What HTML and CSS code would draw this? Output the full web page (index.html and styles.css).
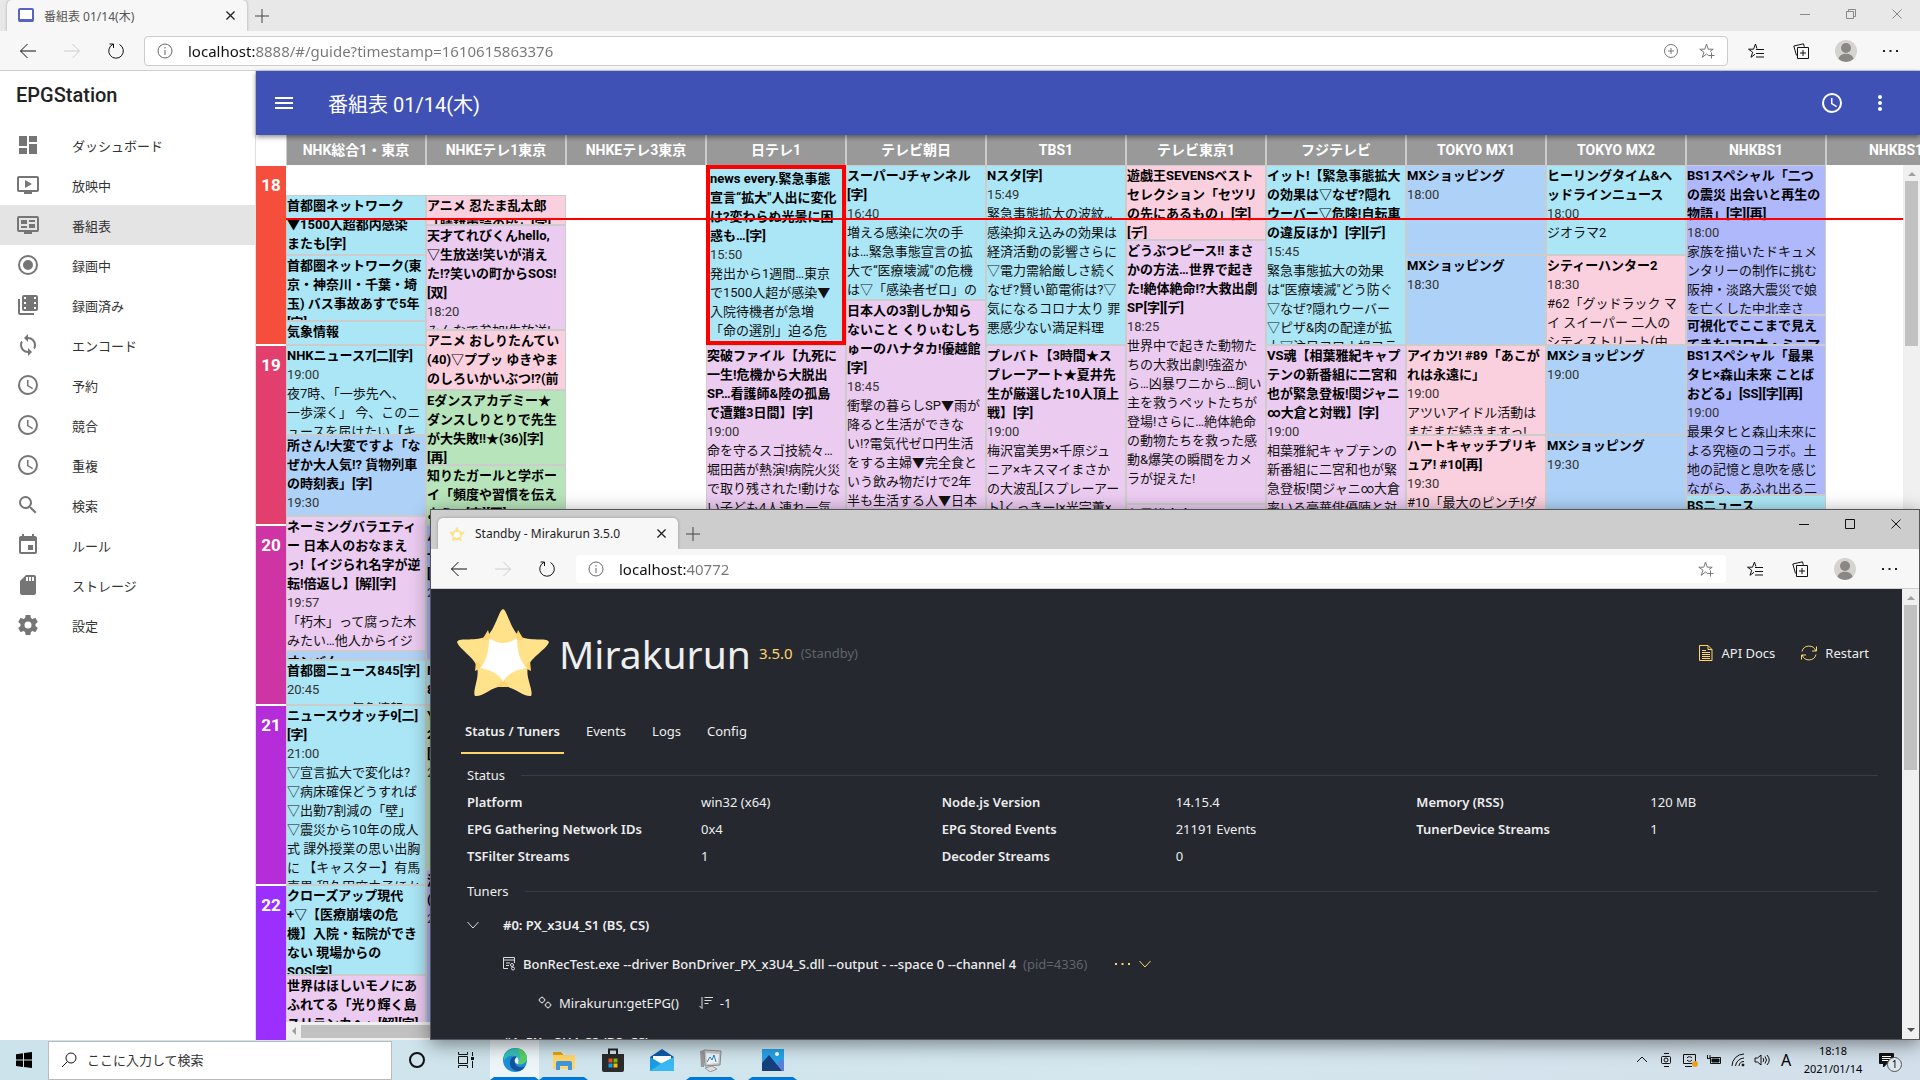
FILE: index.html
```html
<!DOCTYPE html>
<html lang="ja">
<head>
    <meta charset="UTF-8">
    <meta name="viewport" content="width=device-width, initial-scale=1.0">
    <title>番組表 01/14(木)</title>
    <link rel="stylesheet" href="styles.css">
</head>
<body>
    <!-- shared icons -->
    <svg class="sprite" aria-hidden="true">
        <symbol id="i-back" viewBox="0 0 16 16"><path d="M0.5 8H16M7.5 1L0.5 8l7 7" /></symbol>
        <symbol id="i-forward" viewBox="0 0 16 16"><path d="M0 8h15.5M8.500 1l7 7-7 7" /></symbol>
        <symbol id="i-reload" viewBox="0 0 16 16"><path d="M11.500 1.500a7.300 7.300 0 1 1-6.500-.2M1.500 1h4v4" /></symbol>
        <symbol id="i-info" viewBox="0 0 16 16"><circle cx="8" cy="8" r="7" /><path d="M8 7v5M8 4v1.500" /></symbol>
        <symbol id="i-close" viewBox="0 0 10 10"><path d="M0.500 0.500l9 9M9.500 0.500l-9 9" /></symbol>
        <symbol id="i-plus" viewBox="0 0 14 14"><path d="M7 0v14M0 7h14" /></symbol>
        <symbol id="i-star" viewBox="0 0 16 16"><path d="M9.500 12.500L7.500 11 3.300 14.300 5 9.200.8 6.200h5L7.500 1l1.700 5.200h5L11 8.500M12.500 9.500v6M9.500 12.500h6" /></symbol>
        <symbol id="i-favs" viewBox="0 0 16 16"><path d="M7 11.300l-4 3 1.700-5.100L.5 6.200h5L7.500 1l1.400 4.500M8 6.500h8M8 10.500h8M8 14h8" /></symbol>
        <symbol id="i-collect" viewBox="0 0 16 16"><path d="M4.500 4.500h11v11h-11zM10 7v6M7 10h6M3.500 12.500L.8 3 10.500.8l.8 3" /></symbol>
        <symbol id="i-avatar" viewBox="0 0 22 22"><circle cx="11" cy="11" r="11" fill="#d5d3d0" /><circle cx="11" cy="8" r="5" fill="#8b8784" /><path d="M3.500 19c1-7 14-7 15 0A11 11 0 0 1 3.500 19z" fill="#8b8784" /></symbol>
        <symbol id="i-dots" viewBox="0 0 16 16"><path d="M0 7h2v2H0zM6.500 7h2v2h-2zM13 7h2v2h-2z" /></symbol>
        <symbol id="i-clock" viewBox="0 0 24 24"><path d="M12,20A8,8 0 0,0 20,12A8,8 0 0,0 12,4A8,8 0 0,0 4,12A8,8 0 0,0 12,20M12,2A10,10 0 0,1 22,12A10,10 0 0,1 12,22C6.47,22 2,17.5 2,12A10,10 0 0,1 12,2M12.5,7V12.25L17,14.92L16.25,16.15L11,13V7H12.5Z" /></symbol>
        <symbol id="i-miraku" viewBox="0 0 96 96">
            <path d="M48 4C52 5 56 25 64 31C74 37 92 32 94 37C92 44 76 52 73 62C70 72 79 86 76 91C68 92 60 82 48 81C36 82 28 92 20 91C17 86 25 72 22 62C19 52 4 44 2 37C4 32 22 37 32 31C40 25 44 5 48 4z" fill="#ffe28a" />
            <path d="M33 25l-6 10h9zM63 25l6 10h-9zM21 56l-1 10 8-4zM75 56l1 10-8-4zM48 73l-6 9h12z" fill="#ffd56e" />
            <path d="M34 33Q48 43 62 33Q62 54 72 63Q53 66 48 77Q43 66 25 63Q34 54 34 33z" fill="#fff" />
        </symbol>
        <symbol id="i-chevron" viewBox="0 0 12 12"><path d="M0.500 3L6 9l5.500-6" /></symbol>
    </svg>

    <div class="desktop">
        <section class="window window-main" aria-label="EPGStation">
            <div class="tabstrip">
                <div class="tab">
                    <svg class="favicon" viewBox="0 0 16 16"><rect x="1" y="1" width="14" height="12" rx="1" fill="#fff" stroke="#5865c0" stroke-width="2" /><path d="M1 11h14v3H1z" fill="#5865c0" /></svg>
                    <span class="tab-title">番組表 01/14(木)</span>
                    <button class="tab-close" aria-label="タブを閉じる"><svg><use href="#i-close" /></svg></button>
                </div>
                <button class="tab-new" aria-label="新しいタブ"><svg><use href="#i-plus" /></svg></button>
                <div class="controls">
                    <button aria-label="最小化"><svg viewBox="0 0 10 10"><path d="M0 5.500h10" /></svg></button>
                    <button aria-label="元に戻す"><svg viewBox="0 0 10 10"><path d="M.5 2.500h7v7h-7zM2.500 2.500v-2h7v7h-2" /></svg></button>
                    <button aria-label="閉じる"><svg><use href="#i-close" /></svg></button>
                </div>
            </div>
            <div class="toolbar">
                <button aria-label="戻る"><svg><use href="#i-back" /></svg></button>
                <button class="off" aria-label="進む"><svg><use href="#i-forward" /></svg></button>
                <button aria-label="更新"><svg><use href="#i-reload" /></svg></button>
                <div class="address">
                    <svg class="info"><use href="#i-info" /></svg>
                    <input type="text" aria-label="アドレス" value="localhost:8888/#/guide?timestamp=1610615863376">
                    <button aria-label="ズーム"><svg viewBox="0 0 16 16"><circle cx="8" cy="8" r="6.500" /><path d="M8 5v6M5 8h6" /></svg></button>
                    <button aria-label="お気に入りに追加"><svg><use href="#i-star" /></svg></button>
                </div>
                <div class="actions">
                    <button aria-label="お気に入り"><svg><use href="#i-favs" /></svg></button>
                    <button aria-label="コレクション"><svg><use href="#i-collect" /></svg></button>
                    <button class="avatar" aria-label="プロファイル"><svg><use href="#i-avatar" /></svg></button>
                    <button class="more" aria-label="設定など"><svg><use href="#i-dots" /></svg></button>
                </div>
            </div>

            <div class="epg">
                <nav class="sidebar">
                    <h1>EPGStation</h1>
                    <a href="#"><svg viewBox="0 0 24 24"><path d="M13,3V9H21V3M13,21H21V11H13M3,21H11V15H3M3,13H11V3H3V13Z" /></svg>ダッシュボード</a>
                    <a href="#"><svg viewBox="0 0 24 24"><path d="M21,3H3C1.89,3 1,3.89 1,5V17A2,2 0 0,0 3,19H8V21H16V19H21A2,2 0 0,0 23,17V5C23,3.89 22.1,3 21,3M21,17H3V5H21M16,11L9,15V7" /></svg>放映中</a>
                    <a href="#" class="active"><svg viewBox="0 0 24 24"><path d="M21,17V5H3V17H21M21,3A2,2 0 0,1 23,5V17A2,2 0 0,1 21,19H16V21H8V19H3A2,2 0 0,1 1,17V5A2,2 0 0,1 3,3H21M5,7H11V11H5V7M5,13H11V15H5V13M13,7H19V9H13V7M13,11H19V15H13V11Z" /></svg>番組表</a>
                    <a href="#"><svg viewBox="0 0 24 24"><path d="M12,20A8,8 0 0,1 4,12A8,8 0 0,1 12,4A8,8 0 0,1 20,12A8,8 0 0,1 12,20M12,2A10,10 0 0,0 2,12A10,10 0 0,0 12,22A10,10 0 0,0 22,12A10,10 0 0,0 12,2M12,7A5,5 0 0,0 7,12A5,5 0 0,0 12,17A5,5 0 0,0 17,12A5,5 0 0,0 12,7Z" /></svg>録画中</a>
                    <a href="#"><svg viewBox="0 0 24 24"><path fill-rule="evenodd" d="M4,6H2V20A2,2 0 0,0 4,22H18V20H4V6M8,2H20A2,2 0 0,1 22,4V16A2,2 0 0,1 20,18H8A2,2 0 0,1 6,16V4A2,2 0 0,1 8,2M8,4V6H10V4H8M8,9V11H10V9H8M8,14V16H10V14H8M18,4V6H20V4H18M18,9V11H20V9H18M18,14V16H20V14H18Z" /></svg>録画済み</a>
                    <a href="#"><svg viewBox="0 0 24 24"><path d="M12,18A6,6 0 0,1 6,12C6,11 6.25,10.03 6.7,9.2L5.24,7.74C4.46,8.97 4,10.43 4,12A8,8 0 0,0 12,20V23L16,19L12,15M12,4V1L8,5L12,9V6A6,6 0 0,1 18,12C18,13 17.75,13.97 17.3,14.8L18.76,16.26C19.54,15.03 20,13.57 20,12A8,8 0 0,0 12,4Z" /></svg>エンコード</a>
                    <a href="#"><svg><use href="#i-clock" /></svg>予約</a>
                    <a href="#"><svg><use href="#i-clock" /></svg>競合</a>
                    <a href="#"><svg><use href="#i-clock" /></svg>重複</a>
                    <a href="#"><svg viewBox="0 0 24 24"><path d="M9.5,3A6.5,6.5 0 0,1 16,9.5C16,11.11 15.41,12.59 14.44,13.73L14.71,14H15.5L20.5,19L19,20.5L14,15.5V14.71L13.73,14.44C12.59,15.41 11.11,16 9.5,16A6.5,6.5 0 0,1 3,9.5A6.5,6.5 0 0,1 9.5,3M9.5,5C7,5 5,7 5,9.5C5,12 7,14 9.5,14C12,14 14,12 14,9.5C14,7 12,5 9.5,5Z" /></svg>検索</a>
                    <a href="#"><svg viewBox="0 0 24 24"><path d="M19,19H5V8H19M16,1V3H8V1H6V3H5C3.89,3 3,3.89 3,5V19A2,2 0 0,0 5,21H19A2,2 0 0,0 21,19V5C21,3.89 20.1,3 19,3H18V1M17,12H12V17H17V12Z" /></svg>ルール</a>
                    <a href="#"><svg viewBox="0 0 24 24"><path d="M18,8H16V4H18M15,8H13V4H15M12,8H10V4H12M18,2H10L4,8V20A2,2 0 0,0 6,22H18A2,2 0 0,0 20,20V4A2,2 0 0,0 18,2Z" /></svg>ストレージ</a>
                    <a href="#"><svg viewBox="0 0 24 24"><path d="M12,15.5A3.5,3.5 0 0,1 8.5,12A3.5,3.5 0 0,1 12,8.5A3.5,3.5 0 0,1 15.5,12A3.5,3.5 0 0,1 12,15.5M19.43,12.97C19.47,12.65 19.5,12.33 19.5,12C19.5,11.67 19.47,11.34 19.43,11L21.54,9.37C21.73,9.22 21.78,8.95 21.66,8.73L19.66,5.27C19.54,5.05 19.27,4.96 19.05,5.05L16.56,6.05C16.04,5.66 15.5,5.32 14.87,5.07L14.5,2.42C14.46,2.18 14.25,2 14,2H10C9.75,2 9.54,2.18 9.5,2.42L9.13,5.07C8.5,5.32 7.96,5.66 7.44,6.05L4.95,5.05C4.73,4.96 4.46,5.05 4.34,5.27L2.34,8.73C2.21,8.95 2.27,9.22 2.46,9.37L4.57,11C4.53,11.34 4.5,11.67 4.5,12C4.5,12.33 4.53,12.65 4.57,12.97L2.46,14.63C2.27,14.78 2.21,15.05 2.34,15.27L4.34,18.73C4.46,18.95 4.73,19.03 4.95,18.95L7.44,17.94C7.96,18.34 8.5,18.68 9.13,18.93L9.5,21.58C9.54,21.82 9.75,22 10,22H14C14.25,22 14.46,21.82 14.5,21.58L14.87,18.93C15.5,18.67 16.04,18.34 16.56,17.94L19.05,18.95C19.27,19.03 19.54,18.95 19.66,18.73L21.66,15.27C21.78,15.05 21.73,14.78 21.54,14.63L19.43,12.97Z" /></svg>設定</a>
                </nav>

                <div class="epg-main">
                    <header class="appbar">
                        <button aria-label="メニュー"><svg viewBox="0 0 24 24"><path d="M3,6H21V8H3V6M3,11H21V13H3V11M3,16H21V18H3V16Z" /></svg></button>
                        <h2>番組表 01/14(木)</h2>
                        <button aria-label="時刻"><svg><use href="#i-clock" /></svg></button>
                        <button aria-label="その他"><svg viewBox="0 0 24 24"><path d="M12,16A2,2 0 0,1 14,18A2,2 0 0,1 12,20A2,2 0 0,1 10,18A2,2 0 0,1 12,16M12,10A2,2 0 0,1 14,12A2,2 0 0,1 12,14A2,2 0 0,1 10,12A2,2 0 0,1 12,10M12,4A2,2 0 0,1 14,6A2,2 0 0,1 12,8A2,2 0 0,1 10,6A2,2 0 0,1 12,4Z" /></svg></button>
                    </header>

                    <div class="channels">
                        <span>NHK総合1・東京</span><span>NHKEテレ1東京</span><span>NHKEテレ3東京</span><span>日テレ1</span><span>テレビ朝日</span><span>TBS1</span><span>テレビ東京1</span><span>フジテレビ</span><span>TOKYO MX1</span><span>TOKYO MX2</span><span>NHKBS1</span><span>NHKBS1</span>
                    </div>

                    <div class="guide">
                        <div class="hours">
                            <div class="h18">18</div>
                            <div class="h19">19</div>
                            <div class="h20">20</div>
                            <div class="h21">21</div>
                            <div class="h22">22</div>
                        </div>
                        <div class="programs">
                            <div class="now"></div>
                            <!-- --min: length of the programme in minutes -->
                            <div class="col">
                                <div class="gap" style="--min:10"></div>
                                <article class="news" style="--min:20"><h3>首都圏ネットワーク<br>▼1500人超都内感染<br>またも[字]</h3></article>
                                <article class="news" style="--min:22"><h3>首都圏ネットワーク(東<br>京・神奈川・千葉・埼<br>玉) バス事故あすで5年<br>[字]</h3></article>
                                <article class="news" style="--min:8"><h3>気象情報</h3></article>
                                <article class="news" style="--min:30"><h3>NHKニュース7[二][字]</h3><time>19:00</time><p>夜7時、「一歩先へ、<br>一歩深く」 今、このニ<br>ュースを届けたい【キ</p></article>
                                <article class="info-show" style="--min:27"><h3>所さん!大変ですよ「な<br>ぜか大人気!? 貨物列車<br>の時刻表」[字]</h3><time>19:30</time></article>
                                <article class="variety" style="--min:45"><h3>ネーミングバラエティ<br>ー 日本人のおなまえ<br>っ!【イジられ名字が逆<br>転!倍返し】[解][字]</h3><time>19:57</time><p>「朽木」って腐った木<br>みたい…他人からイジ</p></article>
                                <article class="info-show" style="--min:3"><h3>オンバん</h3></article>
                                <article class="news" style="--min:15"><h3>首都圏ニュース845[字]</h3><time>20:45</time><p>ニュース・気象情報</p></article>
                                <article class="news" style="--min:60"><h3>ニュースウオッチ9[二]<br>[字]</h3><time>21:00</time><p>▽宣言拡大で変化は?<br>▽病床確保どうすれば<br>▽出勤7割減の「壁」<br>▽震災から10年の成人<br>式 課外授業の思い出胸<br>に 【キャスター】有馬<br>嘉男 和久田麻由子ほか</p></article>
                                <article class="news" style="--min:30"><h3>クローズアップ現代<br>+▽【医療崩壊の危<br>機】入院・転院ができ<br>ない 現場からの<br>SOS[字]</h3></article>
                                <article class="variety" style="--min:30"><h3>世界はほしいモノにあ<br>ふれてる「光り輝く島<br>スリランカへ」[解][字]</h3></article>
                            </div>
                            <div class="col">
                                <div class="gap" style="--min:10"></div>
                                <article class="anime" style="--min:10"><h3>アニメ 忍たま乱太郎<br>「晴耕雨読の段」[字]</h3></article>
                                <article class="variety" style="--min:35"><h3>天才てれびくんhello,<br>▽生放送!笑いが消え<br>た!?笑いの町からSOS!<br>[双]</h3><time>18:20</time><p>みんなで参加!生放送!</p></article>
                                <article class="anime" style="--min:20"><h3>アニメ おしりたんてい<br>(40)▽ププッ ゆきやま<br>のしろいかいぶつ!?(前</h3></article>
                                <article class="hobby" style="--min:25"><h3>Eダンスアカデミー★<br>ダンスしりとりで先生<br>が大失敗!!★(36)[字]<br>[再]</h3></article>
                                <article class="hobby" style="--min:20"><h3>知りたガールと学ボー<br>イ「頻度や習慣を伝え<br>よう」[字][再]</h3></article>
                                <article class="docu" style="--min:45"><h3>バリバラ<br>一<br>[字]</h3><time>20:00</time></article>
                                <article class="news" style="--min:15"><h3>NHK手話<br>845</h3></article>
                                <article class="hobby" style="--min:55"><h3>Y<br>2<br>[字]</h3><time>21:00</time></article>
                                <article class="docu" style="--min:60"><h3>漢<br>(再)</h3><time>21:55</time></article>
                            </div>
                            <div class="col"></div>
                            <div class="col">
                                <article class="news reserved" style="--min:60"><h3>news every.緊急事態<br>宣言“拡大"人出に変化<br>は?変わらぬ光景に困<br>惑も…[字]</h3><time>15:50</time><p>発出から1週間…東京<br>で1500人超が感染▼<br>入院待機者が急増<br>「命の選別」迫る危</p></article>
                                <article class="variety" style="--min:120"><h3>突破ファイル【九死に<br>一生!危機から大脱出<br>SP…看護師&amp;陸の孤島<br>で遭難3日間】[字]</h3><time>19:00</time><p>命を守るスゴ技続々…<br>堀田茜が熱演!病院火災<br>で取り残された!動けな<br>い子ども4人連れ一気</p></article>
                            </div>
                            <div class="col">
                                <article class="news" style="--min:45"><h3>スーパーJチャンネル<br>[字]</h3><time>16:40</time><p>増える感染に次の手<br>は…緊急事態宣言の拡<br>大で“医療壊滅"の危機<br>は▽「感染者ゼロ」の</p></article>
                                <article class="variety" style="--min:120"><h3>日本人の3割しか知ら<br>ないこと くりぃむしち<br>ゅーのハナタカ!優越館<br>[字]</h3><time>18:45</time><p>衝撃の暮らしSP▼雨が<br>降ると生活ができな<br>い!?電気代ゼロ円生活<br>をする主婦▼完全食と<br>いう飲み物だけで2年<br>半も生活する人▼日本</p></article>
                            </div>
                            <div class="col">
                                <article class="news" style="--min:60"><h3>Nスタ[字]</h3><time>15:49</time><p>緊急事態拡大の波紋…<br>感染抑え込みの効果は<br>経済活動の影響さらに<br>▽電力需給厳しさ続く<br>なぜ?賢い節電術は?▽<br>気になるコロナ太り 罪<br>悪感少ない満足料理</p></article>
                                <article class="variety" style="--min:120"><h3>プレバト【3時間★ス<br>プレーアート★夏井先<br>生が厳選した10人頂上<br>戦】[字]</h3><time>19:00</time><p>梅沢富美男×千原ジュ<br>ニア×キスマイまさか<br>の大波乱[スプレーアー<br>ト]くっきー!×光宗薫×</p></article>
                            </div>
                            <div class="col">
                                <article class="anime" style="--min:25"><h3>遊戯王SEVENSベスト<br>セレクション「セツリ<br>の先にあるもの」[字]<br>[デ]</h3></article>
                                <article class="variety" style="--min:88"><h3>どうぶつピース!! まさ<br>かの方法…世界で起き<br>た!絶体絶命!?大救出劇<br>SP[字][デ]</h3><time>18:25</time><p>世界中で起きた動物た<br>ちの大救出劇!強盗か<br>ら…凶暴ワニから…飼い<br>主を救うペットたちが<br>登場!さらに…絶体絶命<br>の動物たちを救った感<br>動&amp;爆笑の瞬間をカメ<br>ラが捉えた!</p></article>
                                <article class="variety" style="--min:60"><h3>和風総本家</h3></article>
                            </div>
                            <div class="col">
                                <article class="news" style="--min:60"><h3>イット!【緊急事態拡大<br>の効果は▽なぜ?隠れ<br>ウーバー▽危険!自転車<br>の違反ほか】[字][デ]</h3><time>15:45</time><p>緊急事態拡大の効果<br>は“医療壊滅"どう防ぐ<br>▽なぜ?隠れウーバー<br>▽ピザ&amp;肉の配達が拡<br>大▽注目コロナ禍フラ</p></article>
                                <article class="variety" style="--min:120"><h3>VS魂【相葉雅紀キャプ<br>テンの新番組に二宮和<br>也が緊急登板!関ジャニ<br>∞大倉と対戦】[字]</h3><time>19:00</time><p>相葉雅紀キャプテンの<br>新番組に二宮和也が緊<br>急登板!関ジャニ∞大倉<br>率いる豪華俳優陣と対</p></article>
                            </div>
                            <div class="col">
                                <article class="info-show" style="--min:30"><h3>MXショッピング</h3><time>18:00</time></article>
                                <article class="info-show" style="--min:30"><h3>MXショッピング</h3><time>18:30</time></article>
                                <article class="anime" style="--min:30"><h3>アイカツ! #89「あこが<br>れは永遠に」</h3><time>19:00</time><p>アツいアイドル活動は<br>まだまだ続きますっ!</p></article>
                                <article class="anime" style="--min:30"><h3>ハートキャッチプリキ<br>ュア! #10[再]</h3><time>19:30</time><p>#10「最大のピンチ!ダ</p></article>
                            </div>
                            <div class="col">
                                <article class="news" style="--min:30"><h3>ヒーリングタイム&amp;ヘ<br>ッドラインニュース</h3><time>18:00</time><p>ジオラマ2</p></article>
                                <article class="anime" style="--min:30"><h3>シティーハンター2</h3><time>18:30</time><p>#62「グッドラック マ<br>イ スイーパー 二人の<br>シティストリート(中</p></article>
                                <article class="info-show" style="--min:30"><h3>MXショッピング</h3><time>19:00</time></article>
                                <article class="info-show" style="--min:30"><h3>MXショッピング</h3><time>19:30</time></article>
                            </div>
                            <div class="col">
                                <article class="docu" style="--min:50"><h3>BS1スペシャル「二つ<br>の震災 出会いと再生の<br>物語」[字][再]</h3><time>18:00</time><p>家族を描いたドキュメ<br>ンタリーの制作に挑む<br>阪神・淡路大震災で娘<br>を亡くした中北幸さ</p></article>
                                <article class="docu" style="--min:10"><h3>可視化でここまで見え<br>てきた!コロナ・ミニマ</h3></article>
                                <article class="docu" style="--min:50"><h3>BS1スペシャル「最果<br>タヒ×森山未來 ことば<br>おどる」[SS][字][再]</h3><time>19:00</time><p>最果タヒと森山未來に<br>よる究極のコラボ。土<br>地の記憶と息吹を感じ<br>ながら、あふれ出る二</p></article>
                                <article class="news" style="--min:10"><h3>BSニュース</h3></article>
                            </div>
                        </div>
                        <div class="vbar"><i class="arrow-up"></i><i class="thumb"></i></div>
                        <div class="hbar"><i class="arrow-left"></i><i class="thumb"></i></div>
                    </div>
                </div>
            </div>
        </section>

        <section class="window window-front" aria-label="Mirakurun">
            <div class="tabstrip">
                <div class="tab">
                    <svg class="favicon star"><use href="#i-miraku" /></svg>
                    <span class="tab-title">Standby - Mirakurun 3.5.0</span>
                    <button class="tab-close" aria-label="タブを閉じる"><svg><use href="#i-close" /></svg></button>
                </div>
                <button class="tab-new" aria-label="新しいタブ"><svg><use href="#i-plus" /></svg></button>
                <div class="controls">
                    <button aria-label="最小化"><svg viewBox="0 0 10 10"><path d="M0 5.500h10" /></svg></button>
                    <button aria-label="最大化"><svg viewBox="0 0 10 10"><path d="M.5.5h9v9h-9z" /></svg></button>
                    <button aria-label="閉じる"><svg><use href="#i-close" /></svg></button>
                </div>
            </div>
            <div class="toolbar">
                <button aria-label="戻る"><svg><use href="#i-back" /></svg></button>
                <button class="off" aria-label="進む"><svg><use href="#i-forward" /></svg></button>
                <button aria-label="更新"><svg><use href="#i-reload" /></svg></button>
                <div class="address">
                    <svg class="info"><use href="#i-info" /></svg>
                    <input type="text" aria-label="アドレス" value="localhost:40772">
                    <button aria-label="お気に入りに追加"><svg><use href="#i-star" /></svg></button>
                </div>
                <div class="actions">
                    <button aria-label="お気に入り"><svg><use href="#i-favs" /></svg></button>
                    <button aria-label="コレクション"><svg><use href="#i-collect" /></svg></button>
                    <button class="avatar" aria-label="プロファイル"><svg><use href="#i-avatar" /></svg></button>
                    <button class="more" aria-label="設定など"><svg><use href="#i-dots" /></svg></button>
                </div>
            </div>

            <div class="miraku">
                <div class="miraku-page">
                    <header class="brand">
                        <svg class="logo"><use href="#i-miraku" /></svg>
                        <h1>Mirakurun</h1>
                        <span class="version">3.5.0</span>
                        <span class="muted">(Standby)</span>
                        <div class="commands">
                            <a href="#"><svg viewBox="0 0 16 16"><path d="M1.500.5h8.500l4 4v11h-12.500zM10 .5v4h4M4 7.500h8M4 9.500h8M4 11.500h8M4 13.500h8M4 5.500h4" /></svg>API Docs</a>
                            <button><svg viewBox="0 0 16 16"><path d="M1 6.500a7.200 7.200 0 0 1 13.800-.5M15.500 1.500v4.500h-4.500M15 9.500a7.200 7.200 0 0 1-13.800.5M.5 14.500V10H5" /></svg>Restart</button>
                        </div>
                    </header>
                    <nav class="pivot">
                        <a href="#" class="active">Status / Tuners</a>
                        <a href="#">Events</a>
                        <a href="#">Logs</a>
                        <a href="#">Config</a>
                    </nav>
                    <h2 class="separator">Status</h2>
                    <dl class="status">
                        <dt>Platform</dt><dd>win32 (x64)</dd>
                        <dt>Node.js Version</dt><dd>14.15.4</dd>
                        <dt>Memory (RSS)</dt><dd>120 MB</dd>
                        <dt>EPG Gathering Network IDs</dt><dd>0x4</dd>
                        <dt>EPG Stored Events</dt><dd>21191 Events</dd>
                        <dt>TunerDevice Streams</dt><dd>1</dd>
                        <dt>TSFilter Streams</dt><dd>1</dd>
                        <dt>Decoder Streams</dt><dd>0</dd>
                    </dl>
                    <h2 class="separator">Tuners</h2>
                    <div class="tuner">
                        <button aria-label="折りたたむ"><svg class="chevron"><use href="#i-chevron" /></svg></button>
                        <strong>#0: PX_x3U4_S1 (BS, CS)</strong>
                    </div>
                    <div class="tuner process">
                        <svg viewBox="0 0 14 14"><path d="M6 11.500H1.500v-11h11V6M1.500 3h11M4 6h4M4 8.500h3" /><circle cx="10" cy="8" r="1.500" /><circle cx="11" cy="11.500" r="1.500" /></svg>
                        <span class="command">BonRecTest.exe --driver BonDriver_PX_x3U4_S.dll --output - --space 0 --channel 4</span>
                        <span class="muted">(pid=4336)</span>
                        <button class="menu" aria-label="メニュー"><svg class="dots"><use href="#i-dots" /></svg><svg class="chevron"><use href="#i-chevron" /></svg></button>
                    </div>
                    <div class="tuner user">
                        <svg viewBox="0 0 14 14"><circle cx="4" cy="4" r="2.500" /><circle cx="10" cy="9" r="2.500" /><path d="M4 .5v1M4 6.500v1M.5 4h1M6.500 4h1M10 5.500v1M10 11.500v1M6.500 9h1M12.500 9h1" /></svg>
                        <span>Mirakurun:getEPG()</span>
                        <svg class="sort" viewBox="0 0 14 14"><path d="M3 1v11.500M.5 10L3 12.500M5.500 1.500H14M5.500 4.500h7M5.500 7.500h4" /></svg>
                        <span>-1</span>
                    </div>
                    <div class="tuner">
                        <button aria-label="折りたたむ"><svg class="chevron"><use href="#i-chevron" /></svg></button>
                        <strong>#1: PX_x3U4_S2 (BS, CS)</strong>
                    </div>
                </div>
                <div class="vbar"><i class="arrow-up"></i><i class="thumb"></i><i class="arrow-down"></i></div>
            </div>
        </section>

        <footer class="taskbar">
            <button class="start" aria-label="スタート"><svg viewBox="0 0 16 16"><path d="M0 2.300L7 1.200V7.600H0zM8 1l8-1v7.600H8zM0 8.500h7v6.400l-7-1zM8 8.500h8V16l-8-1z" /></svg></button>
            <div class="search">
                <svg viewBox="0 0 16 16"><circle cx="10" cy="6" r="5" /><path d="M6.500 9.500L1 15" /></svg>
                <input type="text" aria-label="検索" value="ここに入力して検索">
            </div>
            <button class="app" aria-label="Cortana"><svg viewBox="0 0 24 24"><circle cx="12" cy="12" r="7" fill="none" stroke="#111" stroke-width="2" /></svg></button>
            <button class="app view" aria-label="タスク ビュー"><svg viewBox="0 0 24 24"><path d="M4.500 8.500h9v7h-9zM4.500 4v2.500h9V4M4.500 20v-2.500h9V20M18.500 4v4M18.500 13v7" fill="none" stroke="#111" /><path d="M17 9h3v3h-3z" fill="#111" /></svg></button>
            <button class="app running current" aria-label="Microsoft Edge"><svg viewBox="0 0 24 24"><circle cx="12" cy="12" r="12" fill="#1a8fd8" /><path d="M1 8C5-2 22-3 24 10c0 5-5 7-9 6 2-2 1-7-4-8C7 7 3 9 1 13z" fill="#35c1b4" /><path d="M14 0c6 1 10 5 10 10 0 5-5 7-9 6 3-4 3-10-1-16z" fill="#58cf6a" /><path d="M8 11c-3 5 0 12 7 12 3 0 6-2 7-5-3 2-9 2-10-3-1-3 1-5 2-6-2-1-5 0-6 2z" fill="#14529c" /><path d="M14 9c-2 1-3 3-2 5 1 2 4 3 7 2l2-1c-1 1-5 2-6 1 1-2 1-5-1-7z" fill="#eaf3f8" /></svg></button>
            <button class="app running" aria-label="エクスプローラー"><svg viewBox="0 0 24 24"><path d="M1 4h8l2 2v3H1z" fill="#e5a50a" /><path d="M1 7h22v14H1z" fill="#ffd667" /><path d="M4 22v-7a2 2 0 0 1 2-2h12a2 2 0 0 1 2 2v7h-4v-4H8v4z" fill="#3f97dd" /></svg></button>
            <button class="app" aria-label="Microsoft Store"><svg viewBox="0 0 24 24"><path d="M8 7V1.500h8V7" fill="none" stroke="#222" stroke-width="2" /><path d="M1 6h22v16a2 2 0 0 1-2 2H3a2 2 0 0 1-2-2z" fill="#2b2b2b" /><path d="M7.500 10.500h4v4h-4z" fill="#f25022" /><path d="M12.500 10.500h4v4h-4z" fill="#7fba00" /><path d="M7.500 15.500h4v4h-4z" fill="#00a4ef" /><path d="M12.500 15.500h4v4h-4z" fill="#ffb900" /></svg></button>
            <button class="app" aria-label="メール"><svg viewBox="0 0 24 24"><path d="M0 9l12-8 12 8v3H0z" fill="#0f5aa8" /><path d="M3 8h18v8H3z" fill="#fff" /><path d="M0 9l12 7 12-7v14H0z" fill="#1b9de2" /><path d="M0 23l12-8 12-6v14z" fill="#3ab8f3" /></svg></button>
            <button class="app running" aria-label="パフォーマンス モニター"><svg viewBox="0 0 24 24"><path d="M1 3l4-1v17H2z" fill="#999" /><path d="M5 2l17 1-1 14-15 1z" fill="#c9c9c9" stroke="#888" /><path d="M7 5l13 1-1 9-11 1z" fill="#edf5fa" /><path d="M8 14l3-5 2 3 2-5 2 7" fill="none" stroke="#2b7fc4" /><path d="M6 20l7-2 5 3-7 3z" fill="#ddd" stroke="#999" /></svg></button>
            <button class="app running photos" aria-label="フォト"><svg viewBox="0 0 24 24"><path d="M1 1h22v22H1z" fill="#26a3e8" /><path d="M12 23l8-12 3 3v9z" fill="#5b7fd8" /><path d="M1 15l7-8 13 16H1z" fill="#173f7c" /><circle cx="16" cy="6" r="2" fill="#fff" /></svg></button>
            <div class="tray">
                <svg viewBox="0 0 16 16"><path d="M3 10l5-5 5 5" /></svg>
                <svg viewBox="0 0 16 16"><rect x="3.500" y="4.500" width="9" height="7" rx="1" /><circle cx="8" cy="8" r="2" /><path d="M6 1.500h5M6 14.500h5" /></svg>
                <svg viewBox="0 0 16 16"><path d="M1.500 2.500h12v9h-12zM3 14.500h7M5 6a3 3 0 0 1 5 0M10 8a3 3 0 0 1-5 0" /><circle cx="13" cy="12" r="3" fill="#f0a020" stroke="none" /></svg>
                <svg viewBox="0 0 16 16"><path d="M4.500 5.500h10v6h-10zM1.500 3v4M4 3v3M1 6.500h3" /><path d="M6 7h7v3H6z" fill="#111" /></svg>
                <svg viewBox="0 0 16 16"><path d="M2 14A12 12 0 0 1 14 2M5.500 14A9 9 0 0 1 14 6M9 14a5 5 0 0 1 5-4.500" /><circle cx="13" cy="13" r="1" fill="#111" /></svg>
                <svg viewBox="0 0 16 16"><path d="M1 6h2.500L7 3v10l-3.500-3H1zM9 6q1.500 2 0 4M11 4.500q3 3.500 0 7M13 3q4.500 5 0 10" /></svg>
                <span class="ime">A</span>
                <div class="clock"><span>18:18</span><span>2021/01/14</span></div>
                <button class="notice" aria-label="通知"><svg viewBox="0 0 18 18"><path d="M1.500 2.500h14v10H9L5.500 16v-3.500h-4z" fill="#111" /><path d="M4 5.500h9M4 7.500h9M4 9.500h6" stroke="#fff" /></svg><b>1</b></button>
            </div>
        </footer>
    </div>
</body>
</html>
```
FILE: styles.css
```css
* {
    box-sizing: border-box;
    margin: 0;
    padding: 0;
}

:root {
    --ui: "Noto Sans", "Noto Sans CJK JP", sans-serif;
    --epg: Roboto, "Noto Sans CJK JP", sans-serif;
    --indigo: #3f51b5;
    --miraku-bg: #25282f;
    --yellow: #ffd56b;
}

body {
    font-family: var(--ui);
    font-size: 13px;
    overflow: hidden;
}

button {
    border: 0;
    background: none;
    color: inherit;
    font: inherit;
}

a {
    color: inherit;
    text-decoration: none;
}

svg {
    display: block;
    flex: none;
    width: 16px;
    height: 16px;
}

.sprite {
    position: absolute;
    width: 0;
    height: 0;
}

.desktop {
    position: relative;
    display: grid;
    grid-template-rows: minmax(0, 1fr) 40px;
    height: 100vh;
}

/* browser window */
.window {
    display: flex;
    flex-direction: column;
    min-width: 0;
    overflow: hidden;
    background: #fff;
}

.window-front {
    position: absolute;
    top: 509px;
    right: 0;
    bottom: 40px;
    left: 430px;
    border: 1px solid #55565a;
    box-shadow: 0 4px 18px rgba(0, 0, 0, 0.45);
}

.tabstrip {
    display: flex;
    flex: none;
    align-items: flex-end;
    height: 31px;
    padding-left: 7px;
    background: #e8e8e8;
}

.window-front .tabstrip {
    height: 39px;
    background: #cdcdcd;
}

.tab {
    display: flex;
    align-items: center;
    width: 240px;
    height: 31px;
    padding: 0 12px 0 11px;
    border-radius: 5px 5px 0 0;
    background: #f7f7f7;
    box-shadow: 0 0 3px rgba(0, 0, 0, 0.3);
}

.favicon {
    margin-right: 10px;
}

.tab-title {
    flex: 1;
    font-size: 12px;
    color: #222;
}

.window-main .tab-title {
    color: #555;
}

.tab button svg {
    width: 9px;
    height: 9px;
    stroke: #222;
    stroke-width: 1.5;
}

.tab-new {
    padding: 8px;
}

.tab-new svg {
    width: 14px;
    height: 14px;
    stroke: #444;
}

.controls {
    display: flex;
    align-self: flex-start;
    margin-left: auto;
}

.controls button {
    display: grid;
    place-items: center;
    width: 46px;
    height: 28px;
}

.controls svg {
    width: 10px;
    height: 10px;
    fill: none;
    stroke: #111;
}

.window-main .controls svg {
    stroke: #888;
}

.toolbar {
    display: flex;
    flex: none;
    align-items: center;
    height: 40px;
    padding: 0 7px 0 6px;
    border-bottom: 1px solid #cfcfcf;
    background: #f7f7f7;
}

.toolbar button {
    display: grid;
    place-items: center;
    width: 44px;
    height: 30px;
    fill: none;
    stroke: #111;
}

.toolbar .off {
    stroke: #ccc;
}

.address {
    display: flex;
    flex: 1;
    align-items: center;
    height: 30px;
    margin: 0 5px 0 6px;
    padding: 0 2px 0 12px;
    border: 1px solid #ccc;
    border-radius: 4px;
    background: #fff;
}

.window-front .address {
    border-color: #f7f7f7;
}

.address .info {
    margin-right: 15px;
    fill: none;
    stroke: #666;
}

.address input {
    flex: 1;
    min-width: 0;
    border: 0;
    outline: 0;
    background: linear-gradient(90deg, #111 67px, #767676 67px);
    background-clip: text;
    color: transparent;
    font: 15px/20px var(--ui);
}

.address button {
    width: 36px;
    stroke: #777;
}

.actions {
    display: flex;
}

.actions button {
    width: 45px;
}

.actions .avatar {
    stroke: none;
}

.avatar svg {
    width: 22px;
    height: 22px;
}

.actions .more {
    fill: #222;
    stroke: none;
}

/* EPGStation */
.epg {
    display: flex;
    flex: 1;
    min-height: 0;
    font-family: var(--epg);
}

.sidebar {
    flex: none;
    width: 256px;
    border-right: 1px solid #e0e0e0;
}

.sidebar h1 {
    padding: 10px 16px 16px;
    font-size: 20px;
    font-weight: 500;
    line-height: 28px;
    color: #222;
}

.sidebar a {
    display: flex;
    align-items: center;
    gap: 32px;
    height: 40px;
    padding: 0 16px;
    color: #333;
}

.sidebar .active {
    background: #e4e4e4;
}

.sidebar svg {
    width: 24px;
    height: 24px;
    fill: #757575;
}

.epg-main {
    display: flex;
    flex: 1;
    flex-direction: column;
    min-width: 0;
}

.appbar {
    position: relative;
    z-index: 2;
    display: flex;
    flex: none;
    align-items: center;
    height: 64px;
    padding: 0 16px 0 4px;
    background: var(--indigo);
    box-shadow: 0 2px 5px rgba(0, 0, 0, 0.45);
    color: #fff;
}

.appbar button {
    display: grid;
    place-items: center;
    width: 48px;
    height: 48px;
}

.appbar svg {
    width: 24px;
    height: 24px;
    fill: #fff;
}

.appbar h2 {
    flex: 1;
    padding-left: 20px;
    font-size: 20px;
    font-weight: 400;
}

.channels {
    display: flex;
    flex: none;
    height: 30px;
    padding-left: 30px;
    overflow: hidden;
}

.channels span {
    flex: none;
    width: 140px;
    border: solid #ccc;
    border-width: 0 1px;
    background: #999;
    color: #fff;
    font-size: 14px;
    font-weight: 700;
    line-height: 30px;
    text-align: center;
}

.guide {
    display: grid;
    flex: 1;
    grid-template: minmax(0, 1fr) 18px / 30px minmax(0, 1fr) 17px;
    min-height: 0;
}

.hours {
    grid-row: 1 / 3;
    overflow: hidden;
}

.hours div {
    height: 180px;
    padding-top: 9px;
    border: solid #fff;
    border-width: 1px 0;
    color: #fff;
    font-size: 17px;
    font-weight: 700;
    line-height: 20px;
    text-align: center;
}

.h18 { background: #f54e3d; }
.h19 { background: #e33f6e; }
.h20 { background: #cf34a4; }
.h21 { background: #b52cd9; }
.h22 { background: #9b2fff; }

.programs {
    position: relative;
    display: flex;
    overflow: hidden;
}

.now {
    position: absolute;
    top: 53px;
    right: 0;
    left: 0;
    height: 2px;
    background: #f00;
}

.col {
    flex: none;
    width: 140px;
}

.gap,
.col article {
    height: calc(var(--min) * 3px);
}

.col article {
    overflow: hidden;
    border: 1px solid #ccc;
    color: #111;
    font-size: 13px;
    line-height: 19px;
    white-space: nowrap;
}

.col h3 {
    font-size: 13px;
    font-weight: 700;
    color: #000;
}

.col time {
    display: block;
    color: #333;
}

.news { background: #aae6f6; }
.anime { background: #facfde; }
.variety { background: #ebcbf0; }
.info-show { background: #aed2f7; }
.docu { background: #afb8fa; }
.hobby { background: #b7e4ba; }

.col .reserved {
    border: 4px solid #f00;
}

/* scrollbars */
.vbar,
.hbar {
    display: flex;
    align-items: center;
    gap: 5px;
    background: #f0f0f0;
}

.vbar {
    flex-direction: column;
    flex: none;
    width: 17px;
    padding: 7px 0;
}

.thumb {
    background: #c1c1c1;
}

.vbar .thumb {
    width: 13px;
    height: 165px;
}

.hbar {
    padding-left: 6px;
}

.hbar .thumb {
    width: 1200px;
    height: 13px;
}

.arrow-up,
.arrow-down {
    border: 4px solid transparent;
    border-top-width: 0;
    border-bottom-color: #a0a0a0;
}

.arrow-down {
    margin-top: auto;
    border-width: 4px 4px 0;
    border-top-color: #505050;
}

.arrow-left {
    border: 4px solid transparent;
    border-left-width: 0;
    border-right-color: #a0a0a0;
}

/* Mirakurun */
.miraku {
    display: flex;
    flex: 1;
    min-height: 0;
    background: var(--miraku-bg);
    color: #eee;
}

.miraku-page {
    flex: 1;
    min-width: 0;
    padding: 16px 11px 0 24px;
    overflow: hidden;
}

.brand {
    display: flex;
    align-items: center;
    height: 96px;
    padding-right: 22px;
}

.brand .logo {
    width: 96px;
    height: 96px;
    margin-right: 8px;
}

.brand h1 {
    font-size: 39px;
    font-weight: 400;
}

.version {
    margin: 0 8px;
    color: var(--yellow);
    font-size: 15px;
}

.muted {
    color: #62646b;
}

.commands {
    display: flex;
    gap: 26px;
    margin-left: auto;
}

.commands a,
.commands button {
    display: flex;
    align-items: center;
    gap: 8px;
}

.commands svg {
    fill: none;
    stroke: var(--yellow);
}

.pivot {
    display: flex;
    gap: 18px;
    margin: 8px 0 9px 6px;
}

.pivot a {
    height: 45px;
    padding: 0 4px;
    border-bottom: 2px solid transparent;
    line-height: 44px;
}

.pivot .active {
    border-color: var(--yellow);
    font-weight: 600;
}

.separator {
    display: flex;
    align-items: center;
    gap: 16px;
    height: 24px;
    margin: 0 13px 2px 12px;
    font-size: 13px;
    font-weight: 400;
}

.separator::after {
    content: "";
    flex: 1;
    height: 1px;
    background: #3a3d44;
}

.status {
    display: grid;
    grid-template-columns: repeat(3, 234px minmax(0, 1fr));
    margin: 0 0 9px 12px;
    line-height: 27px;
}

.status dt {
    font-weight: 600;
}

.tuner {
    display: flex;
    align-items: center;
    height: 39px;
    padding-left: 12px;
}

.tuner svg {
    width: 14px;
    height: 14px;
    fill: none;
    stroke: #ddd;
}

.tuner .chevron {
    width: 12px;
    height: 12px;
}

.tuner strong {
    margin-left: 24px;
    font-weight: 600;
}

.process {
    padding-left: 47px;
}

.user {
    padding-left: 83px;
}

.tuner span {
    margin-left: 7px;
}

.tuner .command {
    font-weight: 500;
}

.tuner .sort {
    margin-left: 20px;
}

.tuner .menu {
    display: flex;
    align-items: center;
    gap: 8px;
    margin-left: 28px;
}

.menu .chevron {
    stroke: var(--yellow);
}

.menu .dots {
    width: 16px;
    height: 16px;
    fill: var(--yellow);
    stroke: none;
}

/* taskbar */
.taskbar {
    display: flex;
    align-items: center;
    background: linear-gradient(90deg, #cce3ec, #d4e6ee 60%, #d3dfea);
}

.start {
    width: 48px;
    padding-left: 16px;
}

.search {
    display: flex;
    align-items: center;
    width: 344px;
    height: 39px;
    padding-left: 12px;
    border: 1px solid #bbb;
    background: #fff;
}

.search svg {
    fill: none;
    stroke: #111;
}

.search input {
    flex: 1;
    min-width: 0;
    margin-left: 10px;
    border: 0;
    outline: 0;
    background: none;
    color: #333;
    font: 13px/20px var(--ui);
}

.app {
    display: grid;
    place-items: center;
    width: 49px;
    height: 40px;
    border: solid transparent;
    border-width: 3px 4px;
}

.app svg {
    width: 24px;
    height: 24px;
}

.running {
    border-bottom-color: #0078d7;
}

.current {
    background: #edf5f9;
}

.photos {
    margin-left: 13px;
}

.tray {
    display: flex;
    align-items: center;
    gap: 8px;
    margin-left: auto;
    padding-right: 24px;
}

.tray svg {
    fill: none;
    stroke: #111;
}

.ime {
    width: 16px;
    font-size: 16px;
    text-align: center;
}

.clock {
    display: flex;
    flex-direction: column;
    width: 62px;
    font-size: 11px;
    line-height: 18px;
    text-align: center;
}

.notice {
    position: relative;
    margin-left: 6px;
}

.notice svg {
    width: 18px;
    height: 18px;
}

.notice b {
    position: absolute;
    top: 6px;
    left: 9px;
    width: 15px;
    height: 15px;
    border: 1px solid #555;
    border-radius: 50%;
    background: #dde8ee;
    font-size: 10px;
    font-weight: 400;
    line-height: 13px;
}
```
